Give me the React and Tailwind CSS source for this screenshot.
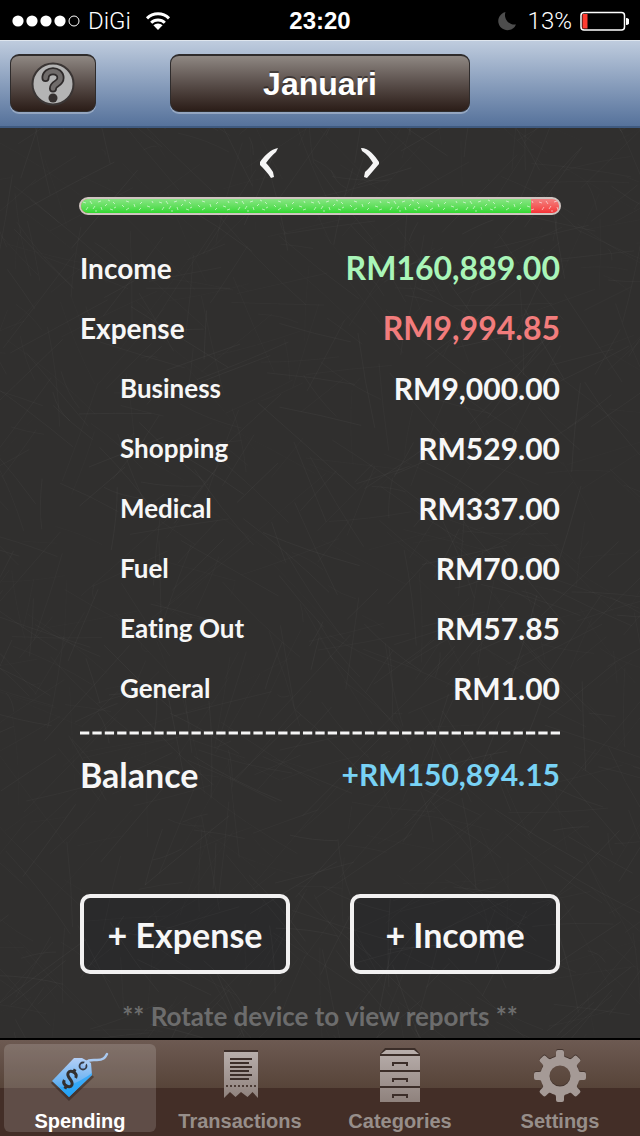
const income = { label: 'Income', value: 160889.0, amount: 'RM160,889.00' }
const expense = { label: 'Expense', value: 9994.85, amount: 'RM9,994.85' }

const categories = [
  { label: 'Business', amount: 'RM9,000.00' },
  { label: 'Shopping', amount: 'RM529.00' },
  { label: 'Medical', amount: 'RM337.00' },
  { label: 'Fuel', amount: 'RM70.00' },
  { label: 'Eating Out', amount: 'RM57.85' },
  { label: 'General', amount: 'RM1.00' },
]

const tabs = [
  { label: 'Spending', Icon: TagIcon, active: true },
  { label: 'Transactions', Icon: ReceiptIcon },
  { label: 'Categories', Icon: CabinetIcon },
  { label: 'Settings', Icon: GearIcon },
]

// Seeded so that the board looks the same on every render
function makeScratches(count) {
  let seed = 7
  const rand = () => {
    seed = (seed * 16807) % 2147483647
    return seed / 2147483647
  }
  return Array.from({ length: count }, () => {
    const x = rand() * 740 - 50
    const y = rand() * 1000 - 50
    const dx = (rand() - 0.5) * 200
    const dy = (rand() - 0.5) * 200
    const bend = (rand() - 0.5) * 8
    return {
      d: `M${x} ${y}q${dx / 2 + bend} ${dy / 2 - bend} ${dx} ${dy}`,
      opacity: 0.01 + rand() * 0.025,
    }
  })
}

const scratches = makeScratches(1100)

function Chalkboard() {
  return (
    <svg
      className="pointer-events-none absolute inset-0 h-full w-full"
      viewBox="0 0 640 910"
      preserveAspectRatio="xMidYMid slice"
      aria-hidden="true"
    >
      <g fill="none" stroke="#fff">
        {scratches.map((s, i) => (
          <path key={i} d={s.d} strokeOpacity={s.opacity} />
        ))}
      </g>
    </svg>
  )
}

function StatusBar() {
  return (
    <div className="grid h-10 grid-cols-3 items-center bg-black pt-px font-['Roboto',sans-serif] text-2xl text-white">
      <div className="flex items-center pl-3">
        <svg width="68" height="14" viewBox="0 0 68 14" aria-hidden="true">
          {[6, 20, 34, 48].map((cx) => (
            <circle key={cx} cx={cx} cy="7" r="5.6" fill="#fff" />
          ))}
          <circle cx="62" cy="7" r="5" fill="none" stroke="#fff" />
        </svg>
        <span className="ml-2 font-light">DiGi</span>
        <svg className="ml-[14px]" width="26" height="20" viewBox="0 0 26 20" aria-hidden="true">
          <g fill="none" stroke="#fff" strokeWidth="3">
            <path d="M2 7.4a15.6 15.6 0 0 1 22 0" />
            <path d="M6.2 11.8a9.6 9.6 0 0 1 13.6 0" />
          </g>
          <path d="M13 19l-4.6-4.7a6.6 6.6 0 0 1 9.2 0z" fill="#fff" />
        </svg>
      </div>
      <div className="text-center font-['Liberation_Sans',sans-serif] font-bold">23:20</div>
      <div className="flex items-center justify-end pr-[11px]">
        <svg width="18" height="20" viewBox="0 0 18 20" aria-hidden="true">
          <path d="M7.5 1A9.2 9.2 0 1 0 18 13.4A9.4 9.4 0 0 1 7.5 1z" fill="#4d4d4d" />
        </svg>
        <span className="ml-3 font-light">13%</span>
        <svg className="ml-2" width="49" height="20" viewBox="0 0 49 20" aria-hidden="true">
          <rect x="1" y="1.5" width="43.5" height="17.5" rx="3" fill="none" stroke="#fff" strokeWidth="1.5" />
          <rect x="2.5" y="3" width="5" height="14.5" fill="#ff3b30" />
          <path d="M46 7a3.4 3.4 0 0 1 0 7z" fill="#fff" />
        </svg>
      </div>
    </div>
  )
}

const navButton =
  'flex h-[58px] items-center justify-center rounded-[9px] border border-[#2f2c2c] border-t-2 bg-linear-to-b from-[#8f8883] via-[#5a4f4b] to-[#2b1d18] shadow-[0_2px_0_rgba(255,255,255,0.3)]'

function NavBar() {
  return (
    <header className="grid grid-cols-[1fr_300px_1fr] border-t border-b-2 border-t-[#dfe6ee] border-b-[#3f5a80] bg-linear-to-b from-[#bfccde] to-[#56729b] px-[10px] pt-[13px] pb-[14px]">
      <button type="button" aria-label="Help" className={`${navButton} w-[86px]`}>
        <svg width="46" height="46" viewBox="0 0 46 46" aria-hidden="true">
          <circle cx="23" cy="23" r="20.5" fill="#b4b4b4" stroke="#3a3534" strokeWidth="2" />
          <g fill="none" strokeLinecap="round" strokeLinejoin="round">
            <path d="M15.5 17c0-9 15-9 15 0 0 6-7.5 5-7.5 10.5" stroke="#2f2b2b" strokeWidth="8" />
            <path d="M15.5 17c0-9 15-9 15 0 0 6-7.5 5-7.5 10.5" stroke="#706c6b" strokeWidth="4.5" />
          </g>
          <circle cx="23" cy="37" r="4.5" fill="#35302f" />
        </svg>
      </button>
      <button
        type="button"
        className={`${navButton} font-['Liberation_Sans',sans-serif] text-[32px] font-bold text-white [text-shadow:0_-2px_0_rgba(0,0,0,0.4)]`}
      >
        Januari
      </button>
    </header>
  )
}

function MonthArrows() {
  return (
    <div className="flex justify-center gap-[72px] pt-[17px]">
      <button type="button" aria-label="Previous month" className="flex h-9 w-7 items-center justify-center">
        <svg width="20" height="32" viewBox="0 0 20 32" aria-hidden="true">
          <path d="M18 1C11 2 4 9 0 15v3c4 4 8 8 11 13l3-1-1-5c-2-3-4-6-7-9 3-4 6-8 10-11z" fill="#f5f5f5" />
        </svg>
      </button>
      <button type="button" aria-label="Next month" className="flex h-9 w-7 items-center justify-center">
        <svg width="20" height="32" viewBox="0 0 20 32" aria-hidden="true">
          <path d="M1 1c8 0 14 8 18 14v2c-4 5-8 9-12 14l-3-1 1-5c3-3 5-5 8-9-3-5-6-9-11-12z" fill="#f5f5f5" />
        </svg>
      </button>
    </div>
  )
}

function RatioBar() {
  const share = (income.value / (income.value + expense.value)) * 100
  return (
    <div className="relative -mx-px mt-4 flex h-[18px] shrink-0 overflow-hidden rounded-full border-2 border-[#cfc4c0] bg-linear-to-b from-[#f28080] to-[#f52f35]">
      <div className="bg-linear-to-b from-[#86e582] to-[#2fd92f]" style={{ width: `${share}%` }} />
      <svg className="absolute inset-0 h-full w-full" aria-hidden="true">
        <defs>
          <pattern id="chalk-dust" width="76" height="14" patternUnits="userSpaceOnUse">
            <path
              d="M2 3l3 1M9 2l2 3M7 8l-2 3M12 10l2-3M17 3l3-1M20 8l1 3M26 5l-2 2M29 10l3 1M32 3l2 2M35 8l-2 1M14 12h2M27 1l2 1M41 6l2 2M45 2l3 1M48 9l-3 2M53 5l1 3M58 11l2-2M61 3l-2 2M66 7l3 1M71 2l1 2M73 10l-3 1"
              fill="none"
              stroke="#fff"
              strokeOpacity="0.55"
            />
          </pattern>
        </defs>
        <rect width="100%" height="100%" fill="url(#chalk-dust)" />
      </svg>
    </div>
  )
}

function Summary() {
  return (
    <dl className="mt-[23px] text-[#f7f7f7]">
      <div className="flex h-[60px] items-center justify-between">
        <dt className="text-[28px]">{income.label}</dt>
        <dd className="text-[32px] text-[#a9f5b8]">{income.amount}</dd>
      </div>
      <div className="flex h-[60px] items-center justify-between">
        <dt className="text-[28px]">{expense.label}</dt>
        <dd className="text-[32px] text-[#f27c7c]">{expense.amount}</dd>
      </div>
      {categories.map((c) => (
        <div key={c.label} className="flex h-[60px] items-center justify-between pl-10">
          <dt className="text-[26px]">{c.label}</dt>
          <dd className="text-[30px]">{c.amount}</dd>
        </div>
      ))}
    </dl>
  )
}

function Balance() {
  return (
    <>
      <svg className="mt-[13px] h-1 w-full" viewBox="0 0 480 4" preserveAspectRatio="none" aria-hidden="true">
        <line x1="0" y1="2" x2="480" y2="2" stroke="#f5f5f5" strokeWidth="3" pathLength="465" strokeDasharray="9 3" />
      </svg>
      <dl className="mt-[7px] flex h-16 items-center justify-between">
        <dt className="text-[34px] text-[#f7f7f7]">Balance</dt>
        <dd className="text-[30px] text-[#78d2f5]">+RM150,894.15</dd>
      </dl>
    </>
  )
}

function ChalkButton({ children }) {
  return (
    <button
      type="button"
      className="h-20 rounded-[10px] border-4 border-[#f2f1f1] bg-[#2a2a2b] text-[34px] whitespace-nowrap text-[#f7f7f7]"
    >
      {children}
    </button>
  )
}

function TagIcon() {
  return (
    <svg className="shrink-0" width="64" height="56" viewBox="0 0 64 56" aria-hidden="true">
      <defs>
        <linearGradient id="tag-fill" x1="0" y1="0" x2="0" y2="1">
          <stop offset="0" stopColor="#b4cff6" />
          <stop offset="0.6" stopColor="#6cb4f2" />
          <stop offset="1" stopColor="#1f9bf0" />
        </linearGradient>
      </defs>
      <path d="M4 34l17 17 24-23" fill="none" stroke="#2b1e1a" strokeOpacity="0.5" strokeWidth="3" />
      <path d="M4 33L26 10h8l9 5 1 12-23 22z" fill="url(#tag-fill)" />
      <path d="M11 39c10 0 22-6 33-14v2L21 49z" fill="#22a5fa" fillOpacity="0.7" />
      <circle cx="35" cy="18" r="3.5" fill="#8fb9ee" stroke="#373a44" strokeWidth="1.8" />
      <path d="M36 17c3-6 8-5 13-5 6 0 8-2 10-6" fill="none" stroke="#a9c9f0" strokeWidth="2.5" strokeLinecap="round" />
      <g transform="rotate(28 22 31)" fill="none" stroke="#33302f" strokeWidth="3">
        <path d="M26.5 27.5c0-5.5-9-5.500-9-1 0 5 9 4 9 9 0 4.500-9 4.500-9-1" />
        <path d="M22 20v4M22 38v4" />
      </g>
    </svg>
  )
}

function GreyFill({ id }) {
  return (
    <defs>
      <linearGradient id={id} x1="0" y1="0" x2="0" y2="1">
        <stop offset="0" stopColor="#b8aeab" />
        <stop offset="1" stopColor="#8f827d" />
      </linearGradient>
    </defs>
  )
}

function ReceiptIcon() {
  return (
    <svg className="shrink-0" width="64" height="56" viewBox="0 0 64 56" aria-hidden="true">
      <GreyFill id="receipt-fill" />
      <path d="M16 2h34v3H16z" fill="#3c2e29" />
      <path d="M16 4h34v46l-5.5-6-5 5-6.5-5-5.5 5-5.5-5-6 6z" fill="url(#receipt-fill)" />
      <path d="M22 11h22M22 15h19M22 19h22M22 23h19M22 27h22M22 31h19" stroke="#3c2e29" strokeWidth="2" />
      <path d="M18 38h31" stroke="#4b3b35" strokeWidth="2" strokeDasharray="2 2" />
    </svg>
  )
}

function CabinetIcon() {
  return (
    <svg className="shrink-0" width="64" height="56" viewBox="0 0 64 56" aria-hidden="true">
      <GreyFill id="cabinet-fill" />
      <path d="M17 0h30l5 6v48H12V6z" fill="#3c2e29" />
      <path d="M18 2h28l5 4H13zM12 8h40v14H12zM12 24h40v14H12zM12 40h40v14H12z" fill="url(#cabinet-fill)" />
      <path d="M25 18v-3h14v3M25 34v-3h14v3M25 50v-3h14v3" fill="none" stroke="#3c2e29" strokeWidth="2" />
    </svg>
  )
}

function GearShape() {
  return (
    <>
      <circle cx="32" cy="28" r="15" fill="none" strokeWidth="9" />
      {[0, 45, 90, 135, 180, 225, 270, 315].map((angle) => (
        <path
          key={angle}
          d="M24 11q4-1 4-4V4q0-2 2-2h4q2 0 2 2v3q0 3 4 4l-3 5H27z"
          transform={`rotate(${angle} 32 28)`}
          stroke="none"
        />
      ))}
    </>
  )
}

function GearIcon() {
  return (
    <svg className="shrink-0" width="64" height="56" viewBox="0 0 64 56" aria-hidden="true">
      <g fill="#44352f" stroke="#44352f" transform="translate(0 -1)">
        <GearShape />
      </g>
      <g fill="#a59a96" stroke="#a59a96">
        <GearShape />
      </g>
    </svg>
  )
}

function TabBar() {
  return (
    <nav className="grid grid-cols-4 border-t-2 border-black bg-linear-to-b from-[#6d5a52] from-0% via-[#574439] via-50% to-[#432e27] to-50% font-['Liberation_Sans',sans-serif]">
      {tabs.map(({ label, Icon, active }) => (
        <button
          key={label}
          type="button"
          aria-current={active ? 'page' : undefined}
          className={`m-1 flex h-[88px] flex-col items-center rounded-md pt-1 text-xl font-bold ${
            active ? 'bg-white/15 text-white' : 'text-[#978e8a]'
          }`}
        >
          <Icon />
          <span className="mt-[5px] leading-6">{label}</span>
        </button>
      ))}
    </nav>
  )
}

export default function App() {
  return (
    <div className="flex min-h-screen flex-col bg-black">
      <StatusBar />
      <NavBar />
      <main className="relative flex flex-1 flex-col bg-[#302f2e] px-20 font-['Lato',sans-serif] font-bold [font-variant-ligatures:none]">
        <Chalkboard />
        <MonthArrows />
        <RatioBar />
        <Summary />
        <Balance />
        <div className="mt-auto grid grid-cols-2 gap-[60px]">
          <ChalkButton>+ Expense</ChalkButton>
          <ChalkButton>+ Income</ChalkButton>
        </div>
        <p className="mt-6 mb-1 text-center text-[26px] leading-9 whitespace-nowrap text-[#6c6c6c]">
          ** Rotate device to view reports **
        </p>
      </main>
      <TabBar />
    </div>
  )
}
